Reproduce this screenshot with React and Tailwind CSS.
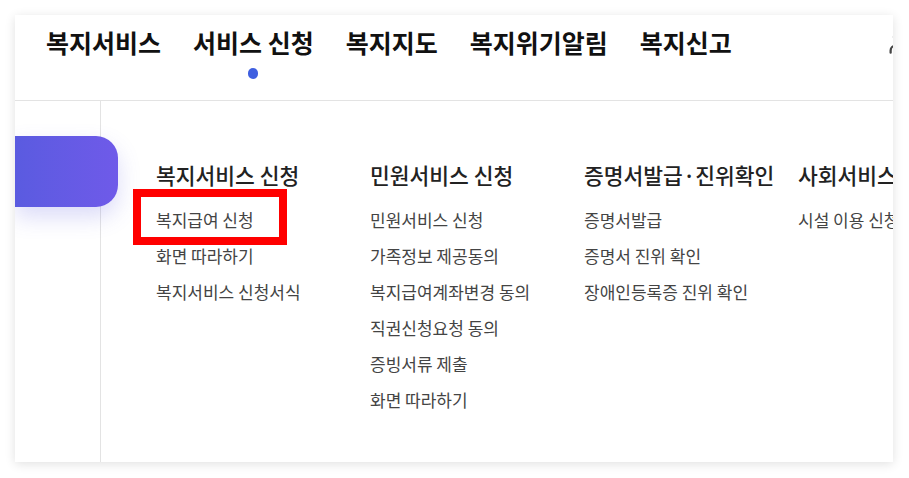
import { User } from "lucide-react";

const nav = ["복지서비스", "서비스 신청", "복지지도", "복지위기알림", "복지신고"];

const columns = [
  {
    title: "복지서비스 신청",
    items: ["복지급여 신청", "화면 따라하기", "복지서비스 신청서식"],
  },
  {
    title: "민원서비스 신청",
    items: ["민원서비스 신청", "가족정보 제공동의", "복지급여계좌변경 동의", "직권신청요청 동의", "증빙서류 제출", "화면 따라하기"],
  },
  {
    title: "증명서발급·진위확인",
    items: ["증명서발급", "증명서 진위 확인", "장애인등록증 진위 확인"],
  },
  {
    title: "사회서비스 이용권",
    items: ["시설 이용 신청"],
  },
];

export default function App() {
  return (
    <div
      className="w-[909px] h-[478px] bg-white pt-[15px] pl-[15px]"
      style={{ fontFamily: '"Noto Sans CJK KR", "Noto Sans", sans-serif' }}
    >
      <div className="relative w-[878px] h-[447px] overflow-hidden bg-white shadow-[0_2px_10px_rgba(0,0,0,0.12)]">
        {/* top nav */}
        <div className="relative h-[86px] border-b border-[#e3e3e3] flex gap-[32px] pl-[31px] pt-[9px]">
          {nav.map((label, i) => (
            <div key={label} className="flex flex-col items-center">
              <span className="text-[25px] leading-[36px] font-bold text-[#111] whitespace-nowrap">
                {label}
              </span>
              {i === 1 && <span className="mt-[8px] w-[10px] h-[11px] rounded-full bg-[#3f5fe0]" />}
            </div>
          ))}
          <User className="absolute left-[870px] top-[14px] w-[27px] h-[27px] text-[#444]" strokeWidth={2} />
        </div>

        {/* mega menu body */}
        <div className="flex h-[361px]">
          <div className="w-[86px] shrink-0 border-r border-[#e3e3e3]" />
          <div className="flex pl-[55px] pt-[59px]">
            {columns.map((col) => (
              <div key={col.title} className="w-[214px] shrink-0">
                <h3 className="text-[21.5px] leading-[30px] font-medium text-[#222] whitespace-nowrap">
                  {col.title}
                </h3>
                <ul className="mt-[12px]">
                  {col.items.map((item) => (
                    <li key={item} className="text-[17px] leading-[36px] text-[#444] whitespace-nowrap">
                      {item}
                    </li>
                  ))}
                </ul>
              </div>
            ))}
          </div>
        </div>

        {/* active side tab */}
        <div className="absolute left-0 top-[121px] w-[103px] h-[71px] rounded-r-[22px] bg-gradient-to-r from-[#5a5be0] to-[#6f5ae9] shadow-[0_10px_22px_rgba(90,90,224,0.22)]" />

        {/* highlight box */}
        <div className="absolute left-[118px] top-[174px] w-[154px] h-[56px] border-[8px] border-[#ff0000]" />
      </div>
    </div>
  );
}
